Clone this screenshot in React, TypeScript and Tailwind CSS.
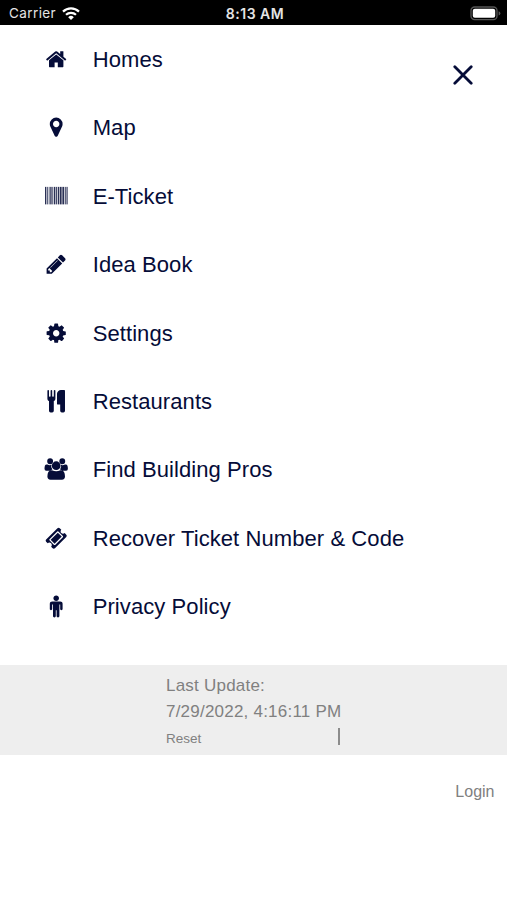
import { useState } from "react";

const bars = [
    [0, 110], [180, 60], [300, 60], [420, 110], [590, 70], [720, 110], [890, 70],
    [1020, 110], [1180, 150], [1390, 150], [1600, 60], [1720, 90],
];

const links = [
    {
        name: "Homes",
        path: "M1472 992v480q0 26-19 45t-45 19h-384v-384h-256v384h-384q-26 0-45-19t-19-45v-480q0-1 .5-3t.5-3l575-474 575 474q1 2 1 6zm223-69l-62 74q-8 9-21 11h-3q-13 0-21-7l-692-577-692 577q-12 8-24 7-13-2-21-11l-62-74q-8-10-7-23.5t11-21.5l719-599q32-26 76-26t76 26l244 204v-195q0-14 9-23t23-9h192q14 0 23 9t9 23v408l219 182q10 8 11 21.5t-7 23.5z",
    },
    {
        name: "Map",
        path: "M1152 640q0-106-75-181t-181-75-181 75-75 181 75 181 181 75 181-75 75-181zm256 0q0 109-33 179l-364 774q-16 33-47.5 52t-67.5 19-67.5-19-46.5-52l-365-774q-33-70-33-179 0-212 150-362t362-150 362 150 150 362z",
    },
    { name: "E-Ticket", path: "" },
    {
        name: "Idea Book",
        path: "M491 1536l91-91-235-235-91 91v107h128v128h107zm523-928q0-22-22-22-10 0-17 7l-542 542q-7 7-7 17 0 22 22 22 10 0 17-7l542-542q7-7 7-17zm-54-192l416 416-832 832h-416v-416zm683 96q0 53-37 90l-166 166-416-416 166-165q36-38 90-38 53 0 91 38l235 234q37 39 37 91z",
    },
    {
        name: "Settings",
        path: "M1152 896q0-106-75-181t-181-75-181 75-75 181 75 181 181 75 181-75 75-181zm512-109v222q0 12-8 23t-20 13l-185 28q-19 54-39 91 35 50 107 138 10 12 10 25t-9 23q-27 37-99 108t-94 71q-12 0-26-9l-138-108q-44 23-91 38-16 136-29 186-7 28-36 28h-222q-14 0-24.5-8.5t-11.5-21.5l-28-184q-49-16-90-37l-141 107q-10 9-25 9-14 0-25-11-126-114-165-168-7-10-7-23 0-12 8-23 15-21 51-66.5t54-70.5q-27-50-41-99l-183-27q-13-2-21-12.5t-8-23.5v-222q0-12 8-23t19-13l186-28q14-46 39-92-40-57-107-138-10-12-10-24 0-10 9-23 26-36 98.5-107.5t94.5-71.5q13 0 26 10l138 107q44-23 91-38 16-136 29-186 7-28 36-28h222q14 0 24.5 8.5t11.5 21.5l28 184q49 16 90 37l142-107q9-9 24-9 13 0 25 10 129 119 165 170 7 8 7 22 0 12-8 23-15 21-51 66.5t-54 70.5q26 50 41 98l183 28q13 2 21 12.5t8 23.5z",
    },
    {
        name: "Restaurants",
        path: "M832 64v640q0 61-35.5 111t-92.5 70v779q0 52-38 90t-90 38h-128q-52 0-90-38t-38-90v-779q-57-20-92.5-70t-35.5-111v-640q0-26 19-45t45-19 45 19 19 45v416q0 26 19 45t45 19 45-19 19-45v-416q0-26 19-45t45-19 45 19 19 45v416q0 26 19 45t45 19 45-19 19-45v-416q0-26 19-45t45-19 45 19 19 45zm768 0v1600q0 52-38 90t-90 38h-128q-52 0-90-38t-38-90v-512h-224q-13 0-22.5-9.5t-9.5-22.5v-800q0-132 94-226t226-94h256q26 0 45 19t19 45z",
    },
    {
        name: "Find Building Pros",
        path: "M645 256a235 235 0 1 1-470 0a235 235 0 1 1 470 0zM1617 256a235 235 0 1 1-470 0a235 235 0 1 1 470 0zM1246 620a350 350 0 1 1-700 0a350 350 0 1 1 700 0zM120 530h80q210 90 320 0q-80 230 70 400q-90 20-190 90h-300q-140 0-140-150q0-330 160-340zM1672 530h-80q-210 90-320 0q80 230-70 400q90 20 190 90h300q140 0 140-150q0-330-160-340zM560 990q336 150 672 0q360-30 368 500q0 250-250 260h-908q-250-10-250-260q8-530 368-500z",
    },
    {
        name: "Recover Ticket Number & Code",
        path: "M1024 452l316 316-572 572-316-316zm-211 979l618-618q19-19 19-45t-19-45l-362-362q-18-18-45-18t-45 18l-618 618q-19 19-19 45t19 45l362 362q18 18 45 18t45-18zm889-637l-907 908q-37 37-90.5 37t-90.5-37l-126-126q56-56 56-136t-56-136-136-56-136 56l-125-126q-37-37-37-90.5t37-90.5l907-906q37-37 90.5-37t90.5 37l125 125q-56 56-56 136t56 136 136 56 136-56l126 125q37 37 37 90.5t-37 90.5z",
    },
    {
        name: "Privacy Policy",
        path: "M1408 704v416q0 40-28 68t-68 28-68-28-28-68v-352h-64v912q0 46-33 79t-79 33-79-33-33-79v-464h-64v464q0 46-33 79t-79 33-79-33-33-79v-912h-64v352q0 40-28 68t-68 28-68-28-28-68v-416q0-80 56-136t136-56h640q80 0 136 56t56 136zm-288-448q0 93-65.5 158.5t-158.5 65.5-158.5-65.5-65.5-158.5 65.5-158.5 158.5-65.5 158.5 65.5 65.5 158.5z",
    },
];

function StatusBar() {
    return (
        <header className="grid h-[25px] grid-cols-3 items-center bg-black pl-[9px] pr-[6px] font-[Inter,sans-serif] text-[#e4e4e4]">
            <div className="flex items-center gap-[6px] pt-[3px]">
                <span className="text-[13.5px] leading-none tracking-[0.4px]">Carrier</span>
                <svg width="18" height="13" viewBox="0 0 18 13" fill="none" stroke="#fff" strokeWidth="2.2" className="-mt-0.5">
                    <path d="M1 4.6a11.5 11.5 0 0 1 16 0M4 7.8a7.2 7.2 0 0 1 10 0" />
                    <path d="M9 13 6.2 10.2a4 4 0 0 1 5.6 0z" fill="#fff" stroke="none" />
                </svg>
            </div>

            <span className="pt-[3px] text-center text-[14px] font-semibold leading-none tracking-[0.5px]">8:13 AM</span>

            <svg width="31" height="15" viewBox="0 0 31 15" className="mt-px justify-self-end">
                <rect x="1" y="1" width="26" height="12.6" rx="3.6" fill="none" stroke="#555" strokeWidth="1.3" />
                <rect x="2.8" y="2.8" width="22.4" height="9" rx="2" fill="#fff" />
                <path d="M28.6 5.2q1.8.6 1.8 2.2t-1.8 2.2z" fill="#555" />
            </svg>
        </header>
    );
}

export default function App() {
    const [open, setOpen] = useState(true);

    return (
        <div className="flex h-[900px] w-[507px] flex-col overflow-hidden bg-white font-['Liberation_Sans',Arial,sans-serif]">
            <StatusBar />

            {/* Menu */}
            <div className="flex h-[640px] items-start justify-between text-[#050c38]">
                {open && (
                    <nav className="flex flex-col">
                        {links.map((link) => (
                            <a key={link.name} href="#" className="flex h-[68.4px] items-center pl-[44.5px]">
                                <svg
                                    width="22.4"
                                    height="22.4"
                                    viewBox="0 0 1792 1792"
                                    fill="currentColor"
                                    className="shrink-0 overflow-visible"
                                >
                                    {link.path ? (
                                        <path d={link.path} />
                                    ) : (
                                        <g opacity="0.85">
                                            {bars.map(([x, width]) => (
                                                <rect key={x} x={x} y="150" width={width} height="1400" />
                                            ))}
                                        </g>
                                    )}
                                </svg>
                                <span className="pt-[1.5px] pl-[25.8px] text-[22px] leading-none tracking-[0.08px] whitespace-nowrap">
                                    {link.name}
                                </span>
                            </a>
                        ))}
                    </nav>
                )}

                <button onClick={() => setOpen(!open)} className="mt-[40px] mr-[34px]" aria-label="Close menu">
                    <svg width="20" height="20" viewBox="0 0 20 20" stroke="currentColor" strokeWidth="2.8" strokeLinecap="round">
                        <path d="M1.8 1.8l16.4 16.4M18.2 1.8L1.8 18.2" />
                    </svg>
                </button>
            </div>

            {/* Last update */}
            <section className="flex h-[90px] justify-center bg-[#eeeeee] text-[#808080]">
                <div className="w-[175px] pt-[8px]">
                    <p className="text-[17px] leading-[25.5px] tracking-[0.22px] whitespace-nowrap">Last Update:</p>
                    <p className="text-[17px] leading-[25.5px] tracking-[0.22px] whitespace-nowrap">7/29/2022, 4:16:11 PM</p>
                    <div className="flex items-center justify-between pt-[4px]">
                        <button className="pt-[4px] text-[13.5px] leading-none">Reset</button>
                        <span className="mr-px h-[17px] w-[2px] bg-[#8c8c8c]" />
                    </div>
                </div>
            </section>

            <div className="flex justify-end pt-[27px] pr-[12.5px]">
                <button className="text-[16px] leading-[19px] text-[#808080]">Login</button>
            </div>
        </div>
    );
}
